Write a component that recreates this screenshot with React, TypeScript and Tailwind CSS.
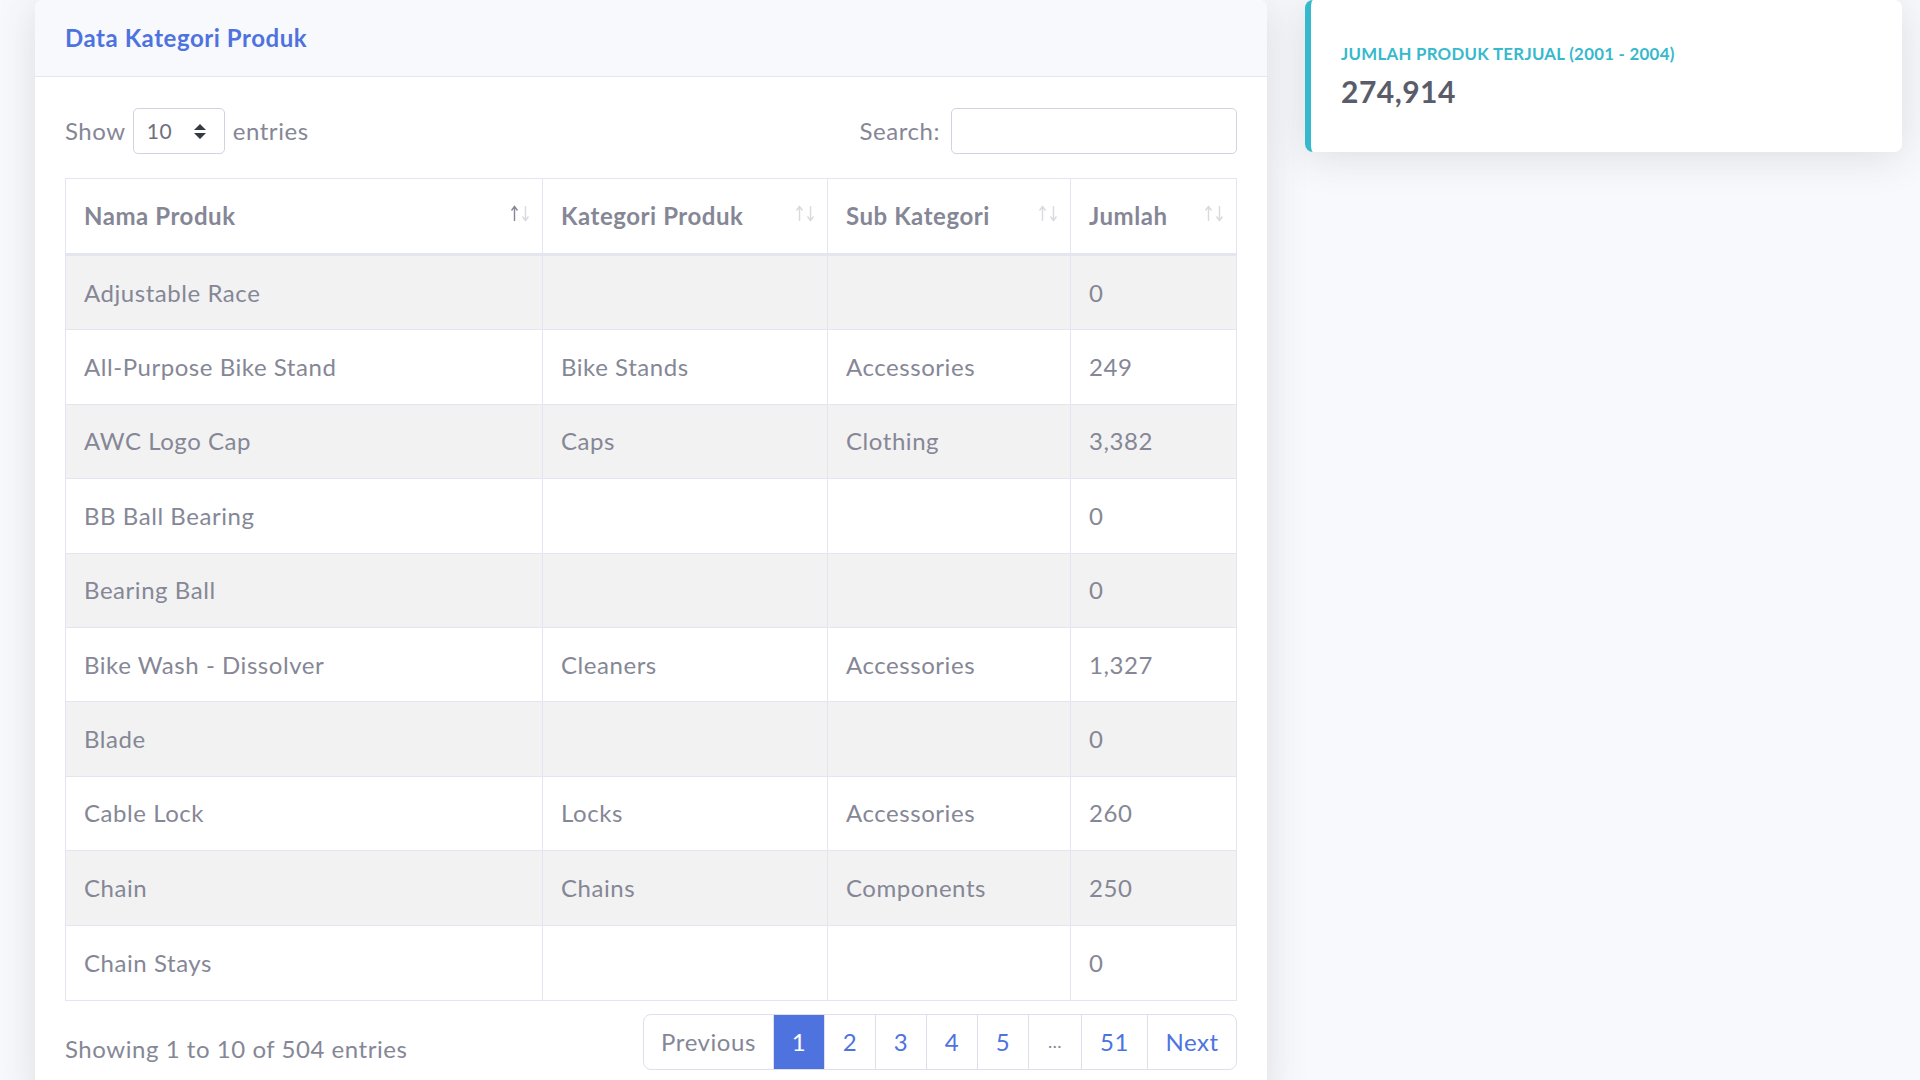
const rows = [
  { nama: "Adjustable Race", kategori: "", sub: "", jumlah: "0" },
  { nama: "All-Purpose Bike Stand", kategori: "Bike Stands", sub: "Accessories", jumlah: "249" },
  { nama: "AWC Logo Cap", kategori: "Caps", sub: "Clothing", jumlah: "3,382" },
  { nama: "BB Ball Bearing", kategori: "", sub: "", jumlah: "0" },
  { nama: "Bearing Ball", kategori: "", sub: "", jumlah: "0" },
  { nama: "Bike Wash - Dissolver", kategori: "Cleaners", sub: "Accessories", jumlah: "1,327" },
  { nama: "Blade", kategori: "", sub: "", jumlah: "0" },
  { nama: "Cable Lock", kategori: "Locks", sub: "Accessories", jumlah: "260" },
  { nama: "Chain", kategori: "Chains", sub: "Components", jumlah: "250" },
  { nama: "Chain Stays", kategori: "", sub: "", jumlah: "0" },
];

const cols = "grid grid-cols-[477px_285px_243px_1fr]";

const SortIcon = ({ active }: { active?: boolean }) => (
  <span className="absolute right-[12px] top-[26px] flex gap-[2px]">
    <svg width="9" height="17" viewBox="0 0 9 17" className={active ? "opacity-100" : "opacity-30"}>
      <path d="M4.5 16V2M1.5 5.5L4.5 1.5L7.5 5.5" stroke="#858796" strokeWidth="1.4" fill="none" />
    </svg>
    <svg width="9" height="17" viewBox="0 0 9 17" className="opacity-30">
      <path d="M4.5 1V15M1.5 11.5L4.5 15.5L7.5 11.5" stroke="#858796" strokeWidth="1.4" fill="none" />
    </svg>
  </span>
);

const HeadCell = ({ label, active, last }: { label: string; active?: boolean; last?: boolean }) => (
  <div className={`relative flex items-center pl-[18px] font-bold ${last ? "" : "border-r border-[#e3e6f0]"}`}>
    {label}
    <SortIcon active={active} />
  </div>
);

const Cell = ({ children, last }: { children?: React.ReactNode; last?: boolean }) => (
  <div className={`flex items-center pl-[18px] ${last ? "" : "border-r border-[#e3e6f0]"}`}>{children}</div>
);

const pages = [
  { label: "Previous", w: "w-[131px]", cls: "text-[#858796]" },
  { label: "1", w: "w-[52px]", cls: "bg-[#4e73df] border-[#4e73df] text-white" },
  { label: "2", w: "w-[52px]", cls: "text-[#4e73df]" },
  { label: "3", w: "w-[52px]", cls: "text-[#4e73df]" },
  { label: "4", w: "w-[52px]", cls: "text-[#4e73df]" },
  { label: "5", w: "w-[52px]", cls: "text-[#4e73df]" },
  { label: "…", w: "w-[54px]", cls: "text-[#858796] text-[18px]" },
  { label: "51", w: "w-[67px]", cls: "text-[#4e73df]" },
  { label: "Next", w: "w-[90px]", cls: "text-[#4e73df]" },
];

export default function App() {
  return (
    <div className="min-h-screen overflow-hidden bg-[#f8f9fc] font-['Lato','Open_Sans',sans-serif] text-[24px] tracking-[0.55px] text-[#858796]">
      <div className="flex items-start gap-[38px] pl-[35px] pr-[18px]">
        <div className="w-[1232px] shrink-0 rounded-[8px] bg-white shadow-[0_4px_42px_0_rgba(58,59,69,0.15)]">
          <div className="flex h-[77px] items-center rounded-t-[8px] border-b border-[#e3e6f0] bg-[#f8f9fc] px-[30px]">
            <h6 className="text-[24px] font-bold text-[#4e73df]">Data Kategori Produk</h6>
          </div>

          <div className="px-[30px] pt-[31px] pb-[30px]">
            <div className="flex h-[46px] items-center justify-between">
              <label className="flex items-center">
                <span>Show</span>
                <div className="relative ml-[7px] mr-[8px] flex h-[46px] w-[92px] items-center rounded-[5px] border border-[#d1d3e2] pl-[13px] text-[21px] text-[#6e707e]">
                  10
                  <svg className="absolute right-[18px] top-[15px]" width="12" height="15" viewBox="0 0 4 5">
                    <path d="M2 0L0 2h4zm0 5L0 3h4z" fill="#343a40" />
                  </svg>
                </div>
                <span>entries</span>
              </label>
              <label className="flex items-center">
                <span>Search:</span>
                <input className="ml-[11px] h-[46px] w-[286px] rounded-[5px] border border-[#d1d3e2] px-3 text-[21px] outline-none" />
              </label>
            </div>

            <div className="mt-[24px] border border-[#e3e6f0]">
              <div className={`${cols} h-[77px] border-b-[3px] border-[#e3e6f0]`}>
                <HeadCell label="Nama Produk" active />
                <HeadCell label="Kategori Produk" />
                <HeadCell label="Sub Kategori" />
                <HeadCell label="Jumlah" last />
              </div>
              {rows.map((r, i) => (
                <div
                  key={r.nama}
                  className={`${cols} h-[74.4px] ${i < rows.length - 1 ? "border-b border-[#e3e6f0]" : ""} ${i % 2 === 0 ? "bg-[#f2f2f2]" : "bg-white"}`}
                >
                  <Cell>{r.nama}</Cell>
                  <Cell>{r.kategori}</Cell>
                  <Cell>{r.sub}</Cell>
                  <Cell last>{r.jumlah}</Cell>
                </div>
              ))}
            </div>

            <div className="mt-[13px] flex items-start justify-between">
              <div className="pt-[17px] leading-[36px]">Showing 1 to 10 of 504 entries</div>
              <div className="flex h-[56px]">
                {pages.map((p, i) => (
                  <div
                    key={p.label}
                    className={`flex h-full items-center justify-center border border-[#dddfeb] ${p.w} ${p.cls} ${i > 0 ? "-ml-px" : "rounded-l-[8px]"} ${i === pages.length - 1 ? "rounded-r-[8px]" : ""}`}
                  >
                    {p.label}
                  </div>
                ))}
              </div>
            </div>
          </div>
        </div>

        <div className="w-[597px] shrink-0 rounded-[8px] border-l-[6px] border-[#36b9cc] bg-white px-[30px] pt-[43px] pb-[43px] shadow-[0_4px_42px_0_rgba(58,59,69,0.15)]">
          <div className="text-[16.8px] font-bold uppercase leading-[22px] tracking-[0.3px] text-[#36b9cc]">
            Jumlah Produk Terjual (2001 - 2004)
          </div>
          <div className="mt-[8px] text-[30px] font-bold leading-[36px] tracking-[0.5px] text-[#5a5c69]">274,914</div>
        </div>
      </div>
    </div>
  );
}
